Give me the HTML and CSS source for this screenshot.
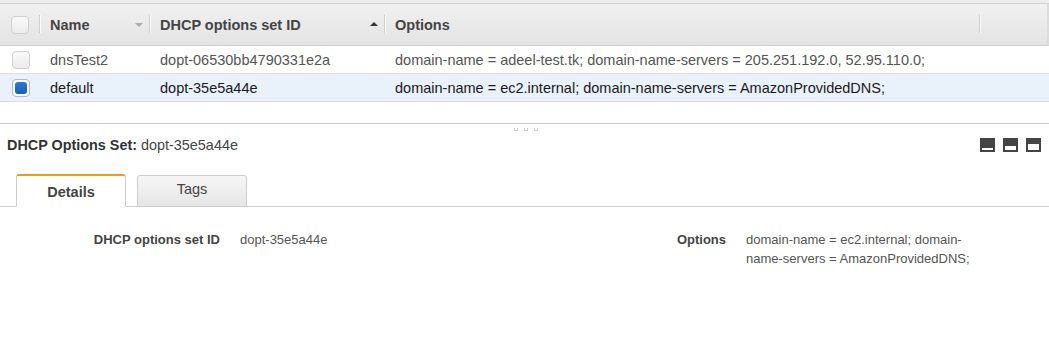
FILE: index.html
```html
<!DOCTYPE html>
<html lang="en">

<head>
  <meta charset="UTF-8" />
  <title>DHCP Options Sets</title>
  <link rel="stylesheet" href="styles.css">
</head>

<body>
  <!-- Grid -->
  <div class="grid">
    <div class="grid-top"></div>
    <div class="row head">
      <div class="cell col-check"><span class="check"></span></div>
      <div class="cell col-name">Name<span class="arrow down"></span></div>
      <div class="cell col-id">DHCP options set ID<span class="arrow up"></span></div>
      <div class="cell col-options">Options</div>
      <div class="cell col-rest"></div>
    </div>
    <div class="row">
      <div class="cell col-check"><span class="check"></span></div>
      <div class="cell col-name">dnsTest2</div>
      <div class="cell col-id">dopt-06530bb4790331e2a</div>
      <div class="cell col-options">domain-name = adeel-test.tk; domain-name-servers = 205.251.192.0, 52.95.110.0;</div>
    </div>
    <div class="row selected">
      <div class="cell col-check"><span class="check on"></span></div>
      <div class="cell col-name">default</div>
      <div class="cell col-id">dopt-35e5a44e</div>
      <div class="cell col-options">domain-name = ec2.internal; domain-name-servers = AmazonProvidedDNS;</div>
    </div>
  </div>

  <!-- Splitter -->
  <div class="splitter">
    <span class="dots"><i></i><i></i><i></i></span>
  </div>

  <!-- Detail pane -->
  <div class="pane">
    <div class="pane-head">
      <div class="title"><b>DHCP Options Set:</b> dopt-35e5a44e</div>
      <div class="layouts">
        <span class="layout l1"></span>
        <span class="layout l2"></span>
        <span class="layout l3"></span>
      </div>
    </div>
    <div class="tabs">
      <div class="tab active">Details</div>
      <div class="tab">Tags</div>
    </div>
    <div class="details">
      <div class="field">
        <div class="label">DHCP options set ID</div>
        <div class="value">dopt-35e5a44e</div>
      </div>
      <div class="field wide">
        <div class="label">Options</div>
        <div class="value">domain-name = ec2.internal; domain-name-servers = AmazonProvidedDNS;</div>
      </div>
    </div>
  </div>
</body>

</html>
```

FILE: styles.css
```css
* {
  margin: 0;
  padding: 0;
  box-sizing: border-box;
}

body {
  font-family: "Liberation Sans", Arial, sans-serif;
  font-size: 14px;
  color: #444;
  background: #fff;
  width: 1049px;
  height: 356px;
  overflow: hidden;
}

/* Grid */
.grid-top {
  height: 4px;
  background: #eeeeee;
  border-bottom: 1px solid #d2d2d2;
}

.row {
  display: flex;
  height: 28px;
  align-items: center;
  border-bottom: 1px solid #dedede;
  color: #555;
  font-size: 14.5px;
}

.row.head {
  height: 42px;
  background: linear-gradient(#f1f1f1, #e3e3e3);
  border-bottom: 1px solid #cfcfcf;
  border-right: 2px solid #dcdcdc;
  font-weight: bold;
  color: #444;
}

.row.selected {
  background: #e9f1fb;
  color: #1a1a1a;
}

.cell {
  position: relative;
  height: 100%;
  display: flex;
  align-items: center;
  white-space: nowrap;
}

.head .cell::after {
  content: "";
  position: absolute;
  right: 0;
  top: 11px;
  height: 18px;
  width: 1px;
  background: #cfcfcf;
  box-shadow: 1px 0 0 #fafafa;
}

.head .col-rest::after {
  display: none;
}

.col-check {
  width: 40px;
  padding-left: 12px;
}

.head .col-check {
  padding-left: 11px;
}

.col-name {
  width: 110px;
  padding-left: 10px;
}

.col-id {
  width: 235px;
  padding-left: 10px;
}

.col-options {
  width: 595px;
  padding-left: 10px;
}

.col-rest {
  flex: 1;
}

.arrow {
  position: absolute;
  right: 7px;
  top: 19px;
  width: 0;
  height: 0;
  border-left: 4px solid transparent;
  border-right: 4px solid transparent;
}

.arrow.down {
  border-top: 4px solid #aaa;
}

.arrow.up {
  top: 18px;
  border-bottom: 4px solid #333;
}

.check {
  display: block;
  width: 18px;
  height: 18px;
  border: 1px solid #cfcfcf;
  border-radius: 4px;
  background: linear-gradient(#fafafa, #ececec);
}

.check.on {
  border-color: #b8b8b8;
  background: #fff;
  padding: 2px;
}

.check.on::before {
  content: "";
  display: block;
  width: 100%;
  height: 100%;
  border-radius: 3px;
  background: linear-gradient(#2a7ad8, #1560bd);
}

/* Splitter */
.splitter {
  margin-top: 21px;
  height: 10px;
  border-top: 1px solid #cccccc;
  display: flex;
  justify-content: center;
}

.dots {
  display: flex;
  gap: 6px;
  margin-top: 4px;
  margin-left: 2px;
}

.dots i {
  width: 4px;
  height: 3px;
  border: 1px solid #cfcfcf;
  border-top: none;
}

/* Detail pane */
.pane-head {
  display: flex;
  justify-content: space-between;
  align-items: center;
  padding: 1px 8px 0 7px;
  height: 23px;
}

.title {
  font-size: 14.4px;
  color: #444;
}

.title b {
  color: #333;
}

.layouts {
  display: flex;
  gap: 8px;
}

.layout {
  position: relative;
  width: 15px;
  height: 14px;
  background: #444;
}

.layout::after {
  content: "";
  position: absolute;
  left: 2px;
  right: 2px;
  bottom: 2px;
  background: #fff;
}

.l1::after {
  height: 2px;
}

.l2::after {
  height: 4px;
}

.l3::after {
  height: 6px;
}

.tabs {
  display: flex;
  gap: 11px;
  padding-left: 16px;
  margin-top: 18px;
  border-bottom: 1px solid #cccccc;
  height: 33px;
  align-items: flex-end;
}

.tab {
  width: 110px;
  height: 32px;
  margin-bottom: -1px;
  border: 1px solid #cccccc;
  border-radius: 3px 3px 0 0;
  background: linear-gradient(#f6f6f6, #e6e6e6);
  font-size: 14.5px;
  color: #444;
  display: flex;
  align-items: center;
  justify-content: center;
  padding-bottom: 4px;
}

.tab.active {
  height: 33px;
  background: #fff;
  border-top: 2px solid #f39c12;
  border-bottom-color: #fff;
  font-weight: bold;
  padding-bottom: 0;
  padding-top: 2px;
}

.details {
  display: flex;
  padding-top: 23px;
  font-size: 13px;
  line-height: 19px;
}

.field {
  display: flex;
  flex-shrink: 0;
  gap: 20px;
  width: 540px;
}

.field .label {
  width: 220px;
  text-align: right;
  font-weight: bold;
  color: #444;
}

.field .value {
  color: #555;
}

.field.wide {
  width: 480px;
}

.field.wide .label {
  width: 186px;
}

.field.wide .value {
  width: 232px;
}
```
